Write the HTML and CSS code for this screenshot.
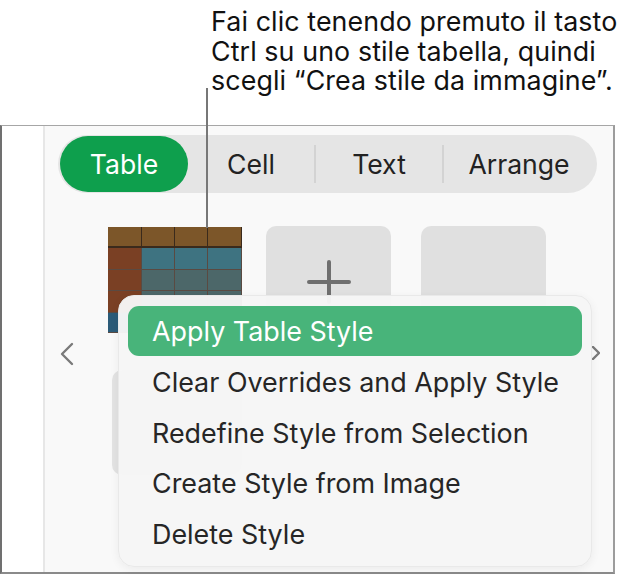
FILE: index.html
```html
<!DOCTYPE html>
<html lang="it">
<head>
<meta charset="utf-8">
<link rel="stylesheet" href="styles.css">
</head>
<body>
<div class="page">
  <div class="caption">
    <p class="line">Fai clic tenendo premuto il tasto</p>
    <p class="line">Ctrl su uno stile tabella, quindi</p>
    <p class="line">scegli “Crea stile da immagine”.</p>
  </div>
  <div class="panel">
    <div class="strip"></div>
    <div class="main">
      <div class="tabs">
        <div class="tab active">Table</div>
        <div class="tab">Cell</div>
        <div class="sep"></div>
        <div class="tab">Text</div>
        <div class="sep"></div>
        <div class="tab wide">Arrange</div>
      </div>
      <div class="styles">
        <div class="thumb">
          <div class="cell h"></div><div class="cell h"></div><div class="cell h"></div><div class="cell h"></div>
          <div class="cell c1"></div><div class="cell b1"></div><div class="cell b1"></div><div class="cell b1"></div>
          <div class="cell c1"></div><div class="cell b2"></div><div class="cell b2"></div><div class="cell b2"></div>
          <div class="cell c1"></div><div class="cell b2"></div><div class="cell b2"></div><div class="cell b2"></div>
          <div class="cell f"></div><div class="cell f"></div><div class="cell f"></div><div class="cell f"></div>
        </div>
        <div class="slot add">
          <svg class="plus" width="44" height="44" viewBox="0 0 44 44"><path d="M22 2V42M2 22H42" stroke="#6f6f6f" stroke-width="4" stroke-linecap="round"/></svg>
        </div>
        <div class="slot"></div>
      </div>
      <div class="nav">
        <svg class="chev" width="14" height="24" viewBox="0 0 14 24"><path d="M12 2L2 12L12 22" fill="none" stroke="#7a7a7a" stroke-width="2.4" stroke-linecap="round" stroke-linejoin="round"/></svg>
        <div class="lower"></div>
        <svg class="chev right" width="8" height="14" viewBox="0 0 8 14"><path d="M1 1L7 7L1 13" fill="none" stroke="#7a7a7a" stroke-width="2.4" stroke-linecap="round" stroke-linejoin="round"/></svg>
      </div>
    </div>
  </div>
  <div class="leader"></div>
  <ul class="menu">
    <li class="item selected">Apply Table Style</li>
    <li class="item">Clear Overrides and Apply Style</li>
    <li class="item">Redefine Style from Selection</li>
    <li class="item">Create Style from Image</li>
    <li class="item">Delete Style</li>
  </ul>
</div>
</body>
</html>
```
FILE: styles.css
```css
* { box-sizing: border-box; }
html, body { margin: 0; padding: 0; background: #fff; }
body { font-family: Inter, "Noto Sans", "DejaVu Sans", sans-serif; color: #1d1d1f; }
.page { position: relative; width: 638px; height: 575px; overflow: hidden; }

.caption {
  padding: 7px 0 0 211px;
  height: 125px;
  display: flex;
  flex-direction: column;
}
.line {
  margin: 0;
  height: 29.6px;
  font-size: 26.8px;
  line-height: 29.6px;
  color: #111;
  letter-spacing: 0.1px;
  white-space: nowrap;
}

.panel {
  display: flex;
  width: 615px;
  height: 449px;
  border-top: 1px solid #a6a6a6;
  border-left: 2px solid #707070;
  border-right: 2px solid #9c9c9c;
  border-bottom: 2px solid #8a8a8a;
  background: #f9f9f9;
}
.strip { width: 43px; flex: none; background: #fff; border-right: 2px solid #e7e7e7; }
.main { flex: 1; padding: 9px 0 0 13px; display: flex; flex-direction: column; }

.tabs {
  width: 539px;
  height: 58px;
  border-radius: 29px;
  background: #e5e5e5;
  display: flex;
  align-items: center;
  padding: 0 2px;
}
.tab { height: 56px; display: flex; align-items: center; justify-content: center; font-size: 26.6px; color: #222; width: 126px; white-space: nowrap; }
.tab.active { background: #0e9f4d; color: #fff; border-radius: 28px; width: 128px; }
.tab.wide { width: 150px; }
.sep { width: 2px; height: 38px; background: #d3d3d3; }

.styles { display: flex; align-items: flex-start; margin-top: 33px; padding-left: 50px; }
.thumb {
  width: 134px;
  display: grid;
  grid-template-columns: 34px 33px 33px 34px;
  grid-template-rows: 21px 22px 21px 22px 20px;
  background: #555;
  margin-top: 1px;
}
.cell { box-shadow: inset -1px -1px 0 #5a4a42; }
.cell.h { background: #7c5629; box-shadow: inset -1px -2px 0 #3a2a1c; }
.cell.c1 { background: #7a4024; }
.cell.b1 { background: #3e7381; }
.cell.b2 { background: #4c6769; }
.cell.f { background: #2b5b78; }

.slot { width: 125px; height: 110px; background: #e0e0e0; border-radius: 10px; margin-left: 29px; }
.slot.add { margin-left: 24px; display: flex; justify-content: center; padding-top: 34px; }
.slot + .slot { margin-left: 30px; }

.nav { display: flex; align-items: flex-start; }
.chev { margin: 6px 0 0 2px; flex: none; }
.lower { width: 130px; height: 105px; background: #e3e3e3; border-radius: 10px; margin: 34px 0 0 38px; }
.chev.right { margin: 10px 0 0 350px; }

.leader { position: absolute; left: 206px; top: 88px; width: 2px; height: 140px; background: #777; }

.menu {
  position: absolute;
  left: 118px;
  top: 295px;
  width: 474px;
  height: 272px;
  margin: 0;
  padding: 10px 9px;
  list-style: none;
  background: rgba(246,246,246,0.97);
  border: 1px solid #e9e9e9;
  border-radius: 16px;
  box-shadow: 0 2px 10px rgba(0,0,0,0.06);
}
.item {
  height: 50.6px;
  display: flex;
  align-items: center;
  padding-left: 24px;
  font-size: 26.9px;
  color: #262626;
  white-space: nowrap;
}
.item.selected { background: #48b47a; color: #fff; border-radius: 11px; height: 50px; margin-bottom: 1px; }
```
